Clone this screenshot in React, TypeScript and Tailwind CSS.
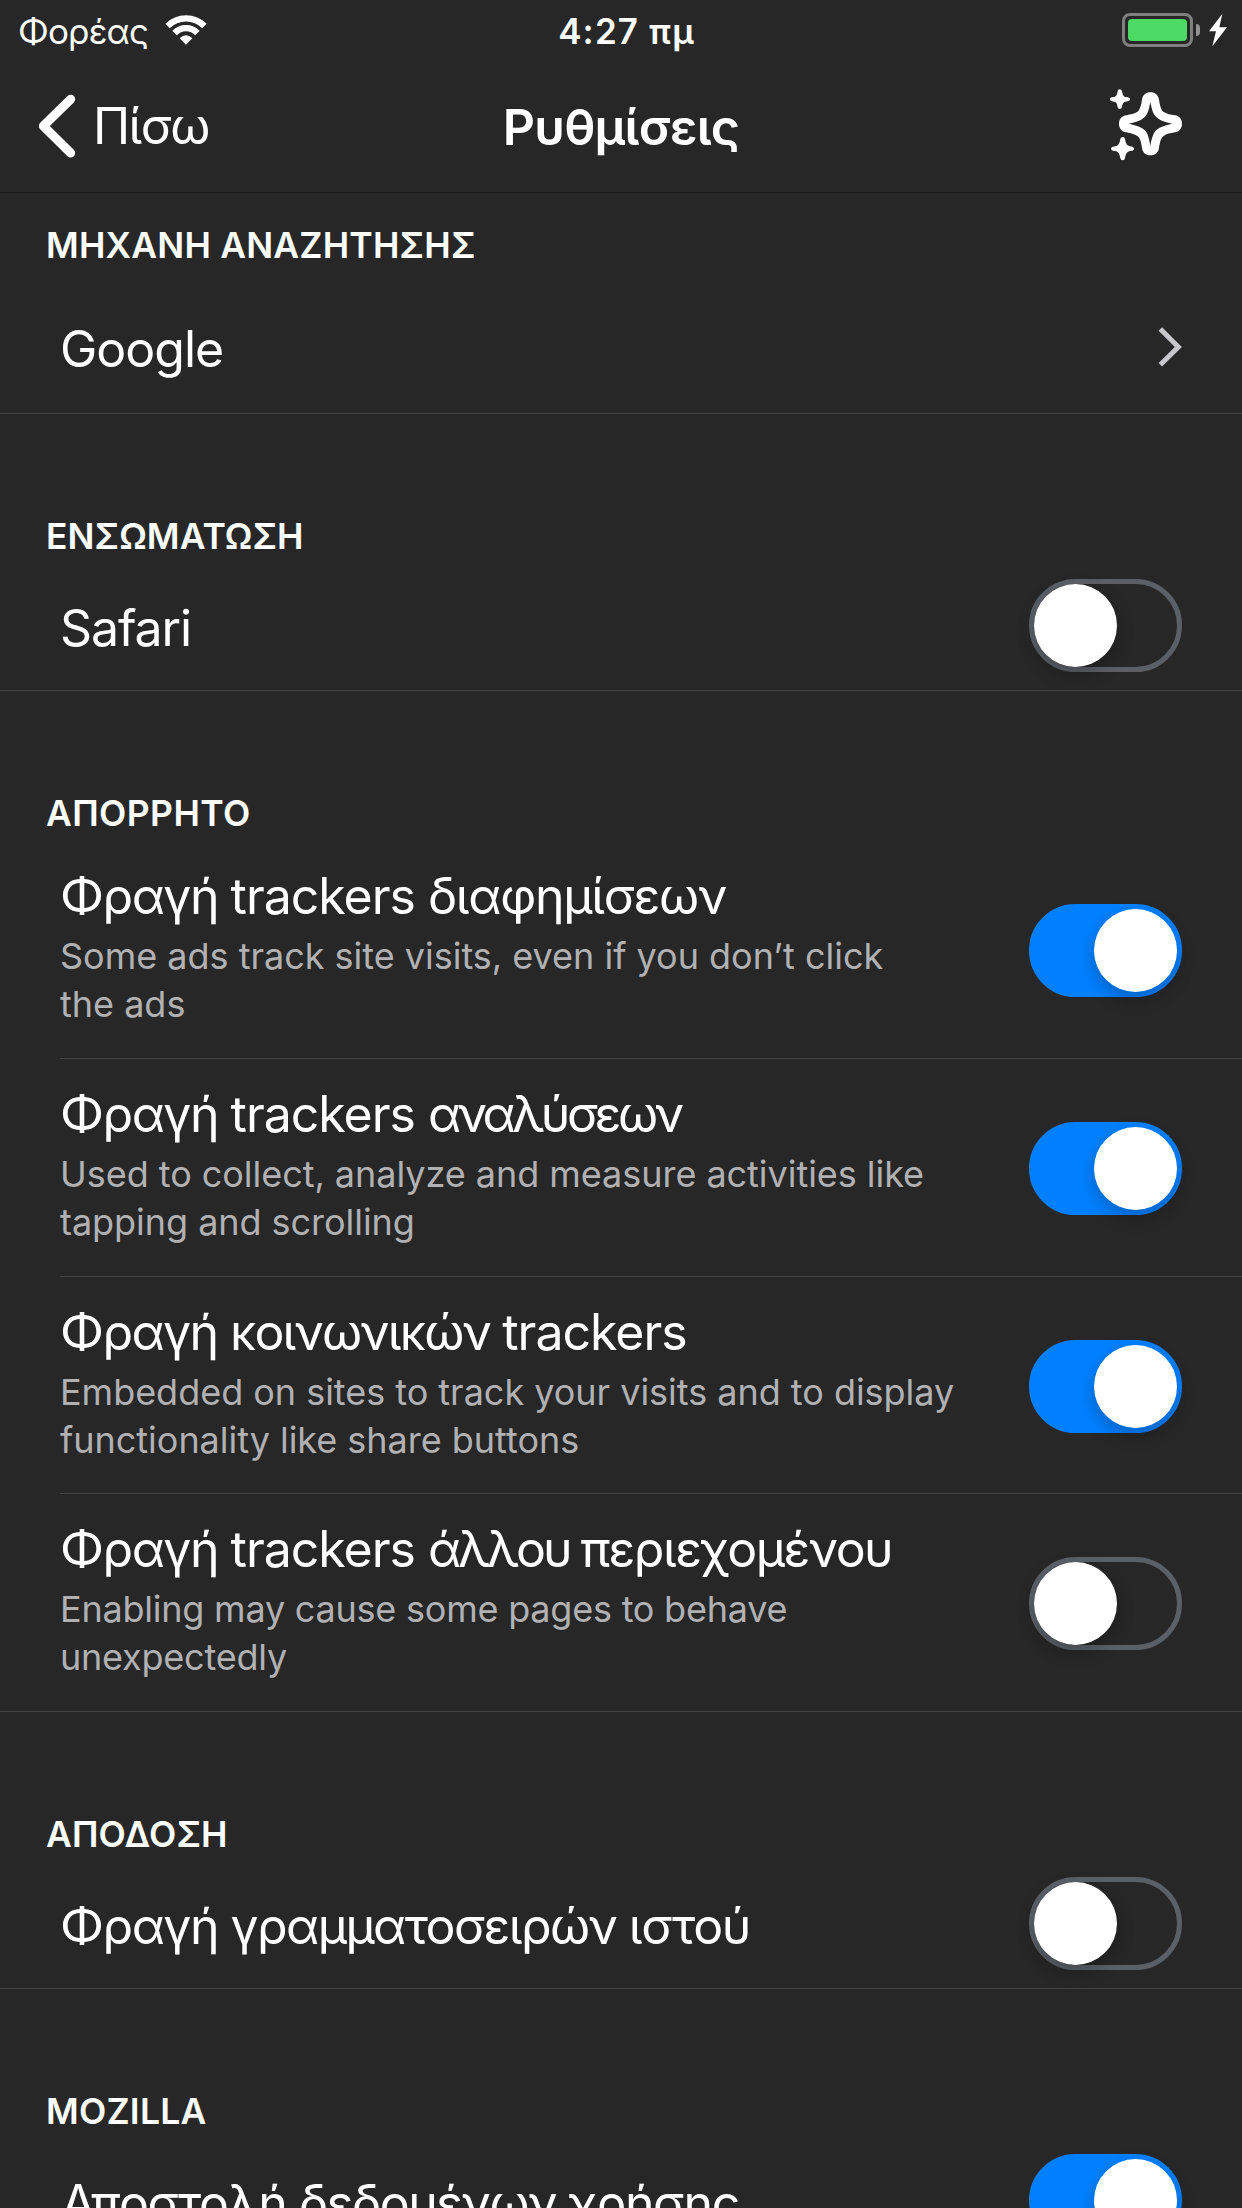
import type { ReactNode } from 'react';

function WifiIcon() {
  return (
    <svg className="ml-4 mt-3.5 h-8 w-[44px] shrink-0" viewBox="492 42 132 96" fill="none">
      <path d="M502.8 77.8A78 78 0 0 1 613.2 77.8" stroke="#fff" strokeWidth="19" />
      <path d="M523.7 98.7A48.5 48.5 0 0 1 592.3 98.7" stroke="#fff" strokeWidth="19" />
      <path d="M558 134L539 115Q558 97 577 115Z" fill="#fff" />
    </svg>
  );
}

function BoltIcon() {
  return (
    <svg className="ml-2 h-[34px] w-5 shrink-0" viewBox="444 40 60 102">
      <path d="M487 42L447 95H468L457 140L501 83H478Z" fill="#fff" />
    </svg>
  );
}

function Battery() {
  return (
    <div className="flex items-center">
      <div className="h-[34px] w-[71px] rounded-[8px] border-3 border-[#7f7f7f] p-[3px]">
        <div className="h-full w-full rounded-[4px] bg-[#4cd964]" />
      </div>
      <div className="ml-[3px] h-3 w-1 rounded-r-full bg-[#939393]" />
      <BoltIcon />
    </div>
  );
}

function BackIcon() {
  return (
    <svg className="h-[66px] w-10 shrink-0" viewBox="110 280 120 198" fill="none">
      <path d="M211 298.500L129 379L211 460" stroke="#fff" strokeWidth="27" strokeLinecap="round" strokeLinejoin="round" />
    </svg>
  );
}

function SparkleIcon() {
  return (
    <svg className="h-[76px] w-[76px] shrink-0" viewBox="144 260 228 228" fill="#fff">
      <path
        fillRule="evenodd"
        d="M246 298C248 284 258 276 271 276C285 276 295 284 297 298C300 318 304 331 313 336C321 341 330 343 345 345C358 347 366 357 366 370C366 384 358 394 345 396C330 399 320 400 311 407C302 414 300 425 297 443C295 457 286 465 271 465C257 465 248 457 246 443C243 425 241 413 232 407C223 401 213 399 199 396C185 394 177 384 177 370C177 357 185 347 199 345C214 342 222 341 230 336C240 330 243 316 246 298ZM271 305C266 331 263 342 254 350C245 359 234 364 206 370C234 376 245 381 254 389C263 399 266 409 271 436C276 409 280 399 289 389C298 381 310 376 337 370C310 364 298 359 289 350C280 342 276 331 271 305Z"
      />
      <path d="M173 272Q174 267 179 267Q185 267 186 272C188 284 190 288 196 290L204 291Q210 292 210 297Q210 302 204 303L196 304C190 306 188 309 186 321Q185 326 179 326Q174 326 173 321C171 309 169 306 163 304L155 303Q150 302 150 297Q150 292 155 291L163 290C169 288 171 284 173 272Z" />
      <path d="M181 416Q182 410 188 410Q194 410 195 416C197 429 200 434 207 437L217 439Q222 440 222 445Q222 450 217 451L207 453C200 456 197 461 195 474Q194 480 188 480Q182 480 181 474C179 461 176 456 169 453L159 451Q153 450 153 445Q153 440 159 439L169 437C176 434 179 429 181 416Z" />
    </svg>
  );
}

function ChevronRight() {
  return (
    <svg className="mt-[62px] mr-[58px] h-11 w-7 shrink-0" viewBox="468 44 84 132" fill="none">
      <path d="M481 56L535 110L481 163" stroke="#c7c7cc" strokeWidth="15" />
    </svg>
  );
}

function Toggle({ on, top }: { on: boolean; top: string }) {
  return (
    <div
      role="switch"
      aria-checked={on}
      className={`mr-[60px] flex h-[93px] w-[153px] shrink-0 items-center rounded-full border-5 ${top} ${
        on ? 'justify-end border-[#0080ff] bg-[#0080ff]' : 'justify-start border-[#5b6067]'
      }`}
    >
      <div className="h-[83px] w-[83px] rounded-full bg-white shadow-[0_7px_18px_rgba(0,0,0,0.24)]" />
    </div>
  );
}

function SectionTitle({ children, className }: { children: ReactNode; className: string }) {
  return <h2 className={`-mb-px pl-[46px] text-[35.5px] leading-9 font-semibold ${className}`}>{children}</h2>;
}

interface Tracker {
  id: string;
  title: ReactNode;
  lines: string[];
  descTracking: string;
  on: boolean;
  height: string;
  divider: string;
}

const blockTrackers = (
  <>
    <span className="tracking-[-1.5px]">Φραγή </span>
    <span className="tracking-[-1.02px]">trackers </span>
  </>
);

const trackers: Tracker[] = [
  {
    id: 'ads',
    title: (
      <>
        {blockTrackers}
        <span className="tracking-[-1.311px]">διαφημίσεων</span>
      </>
    ),
    lines: ['Some ads track site visits, even if you don’t click', 'the ads'],
    descTracking: 'tracking-[-0.01px]',
    on: true,
    height: 'h-[218px]',
    divider: 'ml-[60px]',
  },
  {
    id: 'analytics',
    title: (
      <>
        {blockTrackers}
        <span className="tracking-[-3.5px]">αναλύσεων</span>
      </>
    ),
    lines: ['Used to collect, analyze and measure activities like', 'tapping and scrolling'],
    descTracking: 'tracking-[-0.04px]',
    on: true,
    height: 'h-[218px]',
    divider: 'ml-[60px]',
  },
  {
    id: 'social',
    title: (
      <>
        <span className="tracking-[-1.6px]">Φραγή </span>
        <span className="tracking-[-1.85px]">κοινωνικών </span>
        <span className="tracking-[-1.02px]">trackers</span>
      </>
    ),
    lines: ['Embedded on sites to track your visits and to display', 'functionality like share buttons'],
    descTracking: 'tracking-[-0.022px]',
    on: true,
    height: 'h-[217px]',
    divider: 'ml-[60px]',
  },
  {
    id: 'content',
    title: (
      <>
        {blockTrackers}
        <span className="tracking-[-3.1px]">άλλου </span>
        <span className="tracking-[-1.55px]">περιεχομένου</span>
      </>
    ),
    lines: ['Enabling may cause some pages to behave', 'unexpectedly'],
    descTracking: 'tracking-[-0.22px]',
    on: false,
    height: 'h-[218px]',
    divider: '',
  },
];

function TrackerRow({ item }: { item: Tracker }) {
  return (
    <div className={`flex flex-col ${item.height}`}>
      <div className="flex flex-1 items-start justify-between">
        <div className="pt-[25px] pl-[60px] whitespace-nowrap">
          <div className="text-[50px] leading-[60px]">{item.title}</div>
          <div className={`mt-1.5 text-[36px] leading-[48px] text-[#b1b1b3] ${item.descTracking}`}>
            {item.lines.map((line) => (
              <div key={line}>{line}</div>
            ))}
          </div>
        </div>
        <Toggle on={item.on} top="mt-[63px]" />
      </div>
      <div className={`h-px shrink-0 bg-[#424244] ${item.divider}`} />
    </div>
  );
}

function SimpleRow({ title, on, className }: { title: ReactNode; on: boolean; className: string }) {
  return (
    <div className="flex h-[137px] items-start justify-between border-b border-[#424244]">
      <div className={`pt-11 pl-[60px] text-[50px] leading-[60px] whitespace-nowrap ${className}`}>{title}</div>
      <Toggle on={on} top="mt-[25px]" />
    </div>
  );
}

export default function App() {
  return (
    <div className="h-[2208px] w-[1242px] overflow-hidden bg-[#272727] font-['Inter',sans-serif] text-white">
      <div className="grid h-[60px] grid-cols-[1fr_auto_1fr] items-start">
        <div className="flex pl-[18px]">
          <span className="mt-[7px] text-[35px] leading-[48px] tracking-[-0.854px]">Φορέας</span>
          <WifiIcon />
        </div>
        <span className="mt-[7px] ml-[11px] text-[35px] leading-[48px] font-semibold tracking-[1.13px]">4:27 πμ</span>
        <div className="flex justify-end pt-[13px] pr-[14px]">
          <Battery />
        </div>
      </div>

      <header className="grid h-[133px] grid-cols-[1fr_auto_1fr] items-start border-b border-[#1b1b1b]">
        <button className="flex items-start pl-[37px]">
          <span className="mt-[33px] flex">
            <BackIcon />
          </span>
          <span className="mt-9 ml-4 text-[50px] leading-[60px] tracking-[-1.6px]">Πίσω</span>
        </button>
        <h1 className="mt-[37px] text-[50px] leading-[60px] font-semibold tracking-[-0.779px]">Ρυθμίσεις</h1>
        <div className="flex justify-end pt-[27px] pr-[58px]">
          <SparkleIcon />
        </div>
      </header>

      <section>
        <SectionTitle className="pt-[35px] tracking-[0.18px]">ΜΗΧΑΝΗ ΑΝΑΖΗΤΗΣΗΣ</SectionTitle>
        <div className="flex h-[151px] items-start justify-between border-b border-[#424244]">
          <div className="pt-14 pl-[60px] text-[50px] leading-[60px] tracking-[-1px]">Google</div>
          <ChevronRight />
        </div>
      </section>

      <section>
        <SectionTitle className="pt-[105px] tracking-[0.055px]">ΕΝΣΩΜΑΤΩΣΗ</SectionTitle>
        <SimpleRow title="Safari" on={false} className="tracking-[-1.1px]" />
      </section>

      <section>
        <SectionTitle className="pt-[105px] pb-[10px] tracking-[0.4px]">ΑΠΟΡΡΗΤΟ</SectionTitle>
        {trackers.map((item) => (
          <TrackerRow key={item.id} item={item} />
        ))}
      </section>

      <section>
        <SectionTitle className="pt-[105px] tracking-[0.141px]">ΑΠΟΔΟΣΗ</SectionTitle>
        <SimpleRow
          title={
            <>
              Φραγή <span className="tracking-[-1.6px]">γραμματοσειρών </span>
              <span className="tracking-[-1.3px]">ιστού</span>
            </>
          }
          on={false}
          className="tracking-[-1.5px]"
        />
      </section>

      <section>
        <SectionTitle className="pt-[105px] tracking-[0.223px]">MOZILLA</SectionTitle>
        <SimpleRow title="Αποστολή δεδομένων χρήσης" on className="pl-[61px] tracking-[-1.45px]" />
      </section>
    </div>
  );
}
